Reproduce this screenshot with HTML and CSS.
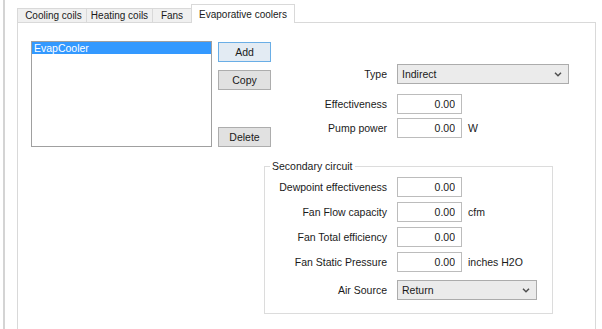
FILE: index.html
```html
<!DOCTYPE html>
<html lang="en">
<head>
    <meta charset="UTF-8">
    <title>Evaporative coolers</title>
    <link rel="stylesheet" href="styles.css">
</head>
<body>
<div class="frame">
    <div class="tabs">
        <button class="tab tab-cooling">Cooling coils</button>
        <button class="tab tab-heating">Heating coils</button>
        <button class="tab tab-fans">Fans</button>
        <button class="tab tab-evap active">Evaporative coolers</button>
    </div>
    <div class="panel">
        <div class="top">
            <div class="list">
                <div class="item selected">EvapCooler</div>
            </div>
            <div class="buttons">
                <button class="btn default">Add</button>
                <button class="btn btn-copy">Copy</button>
                <button class="btn btn-delete">Delete</button>
            </div>
            <div class="form main-form">
                <label class="row-type">Type</label>
                <div class="select select-type row-type">
                    <span>Indirect</span>
                    <svg class="chevron" width="8" height="5" viewBox="0 0 8 5"><path d="M1 0.8 L4 3.8 L7 0.8" fill="none" stroke="#505050" stroke-width="1.5"/></svg>
                </div>
                <label>Effectiveness</label>
                <input type="text" value="0.00">
                <span class="unit"></span>
                <label>Pump power</label>
                <input type="text" value="0.00">
                <span class="unit">W</span>
            </div>
        </div>
        <fieldset class="group">
            <legend>Secondary circuit</legend>
            <div class="form group-form">
                <label>Dewpoint effectiveness</label>
                <input type="text" value="0.00">
                <span class="unit"></span>
                <label>Fan Flow capacity</label>
                <input type="text" value="0.00">
                <span class="unit">cfm</span>
                <label>Fan Total efficiency</label>
                <input type="text" value="0.00">
                <span class="unit"></span>
                <label>Fan Static Pressure</label>
                <input type="text" value="0.00">
                <span class="unit">inches H2O</span>
                <label class="row-air">Air Source</label>
                <div class="select select-air row-air">
                    <span>Return</span>
                    <svg class="chevron" width="8" height="5" viewBox="0 0 8 5"><path d="M1 0.8 L4 3.8 L7 0.8" fill="none" stroke="#505050" stroke-width="1.5"/></svg>
                </div>
            </div>
        </fieldset>
    </div>
</div>
</body>
</html>
```

FILE: styles.css
```css
* {
    box-sizing: border-box;
}
body {
    margin: 0;
    background: #fff;
    font-family: "Liberation Sans", Arial, sans-serif;
    font-size: 10.5px;
    color: #1a1a1a;
    height: 329px;
    overflow: hidden;
}
.frame {
    margin-left: 3px;
    border-left: 2px solid #d4d4d4;
    height: 329px;
    padding: 4px 6px 0 12px;
    display: flex;
    flex-direction: column;
}
.tabs {
    display: flex;
    align-items: flex-end;
    height: 18px;
}
.tab {
    height: 14px;
    padding: 0;
    margin: 0;
    border: 1px solid #d9d9d9;
    border-left: none;
    border-bottom: none;
    background: #f0f0f0;
    font: inherit;
    font-size: 10px;
    color: #1a1a1a;
    line-height: 13px;
    text-align: center;
}
.tab-cooling {
    width: 70px;
    border-left: 1px solid #d9d9d9;
    padding-left: 3px;
}
.tab-heating {
    width: 66px;
}
.tab-fans {
    width: 39px;
}
.tab.active {
    width: 104px;
    height: 19px;
    margin-left: -1px;
    margin-bottom: -1px;
    padding-top: 1px;
    border-left: 1px solid #d9d9d9;
    background: #fff;
    position: relative;
    z-index: 1;
}
.panel {
    flex-grow: 1;
    border: 1px solid #d9d9d9;
    border-bottom: none;
    padding: 18px 0 0 13px;
}
.top {
    display: flex;
    align-items: flex-start;
}
.list {
    width: 181px;
    height: 106px;
    border: 1px solid #a0a0a0;
    background: #fff;
}
.item {
    height: 12px;
    line-height: 12px;
    padding-left: 2px;
}
.item.selected {
    background: #3399ff;
    color: #fff;
}
.buttons {
    display: flex;
    flex-direction: column;
    width: 53px;
    margin-left: 6px;
    margin-top: 1px;
}
.btn {
    height: 20px;
    padding: 0;
    border: 1px solid #adadad;
    background: #e1e1e1;
    font: inherit;
    color: #1a1a1a;
}
.btn.default {
    border-color: #6aaee6;
    background: #e3ebf3;
}
.btn-copy {
    margin-top: 8px;
}
.btn-delete {
    margin-top: 37px;
}
.form {
    display: grid;
    grid-template-columns: 117px 65px auto;
    row-gap: 4px;
    align-items: center;
}
.form label {
    text-align: right;
    padding-right: 10px;
}
.form input {
    width: 65px;
    height: 20px;
    border: 1px solid #bcbcbc;
    padding: 0 6px 0 0;
    font: inherit;
    text-align: right;
    color: #1a1a1a;
}
.unit {
    padding-left: 6px;
}
.main-form {
    margin-left: 9px;
    margin-top: 23px;
}
.main-form label.row-type,
.main-form .select.row-type {
    margin-bottom: 6px;
}
.select {
    position: relative;
    height: 20px;
    border: 1px solid #acacac;
    background: #ebebeb;
    padding-left: 4px;
    line-height: 18px;
    grid-column: 2 / 4;
}
.select-type {
    width: 172px;
}
.select-air {
    width: 140px;
}
.chevron {
    position: absolute;
    right: 6px;
    top: 7px;
}
.group {
    width: 289px;
    margin: 13px 0 0 233px;
    padding: 0 0 13px 0;
    border: 1px solid #dcdcdc;
    min-width: 0;
}
.group legend {
    margin-left: 5px;
    padding: 0 2px;
    line-height: 13px;
}
.group-form {
    grid-template-columns: 122px 65px auto;
    row-gap: 5px;
    margin-left: 10px;
    margin-top: 4px;
}
.group-form .row-air {
    margin-top: 3px;
}
```
